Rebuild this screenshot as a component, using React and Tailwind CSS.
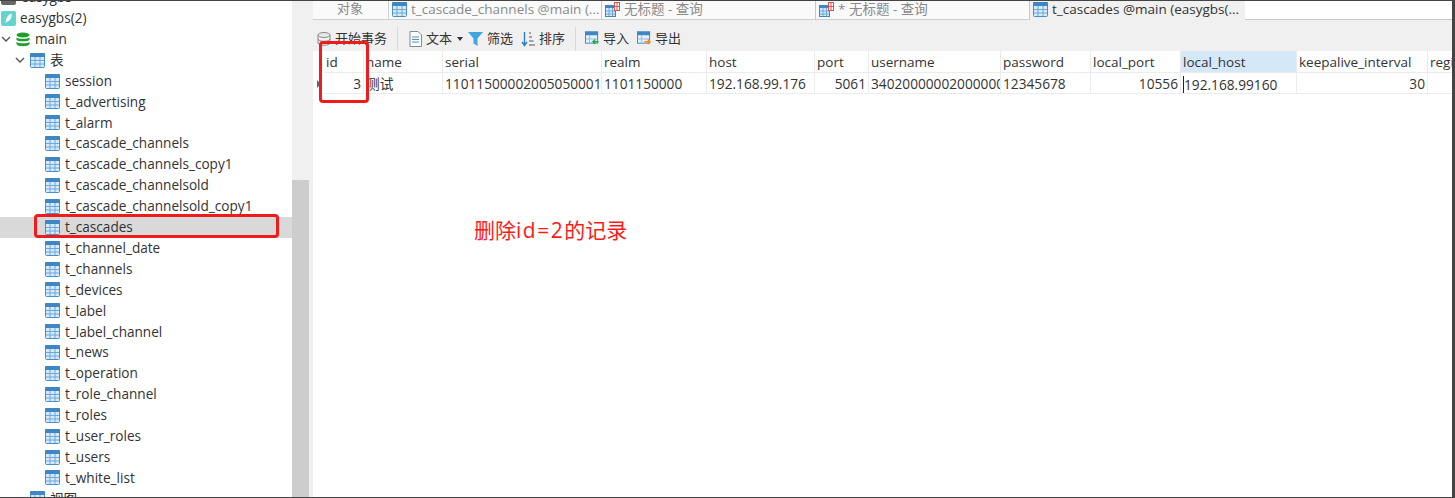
const FONT = "font-['Open_Sans','Noto_Sans_CJK_SC',sans-serif]";

const TABLES = [
  "session",
  "t_advertising",
  "t_alarm",
  "t_cascade_channels",
  "t_cascade_channels_copy1",
  "t_cascade_channelsold",
  "t_cascade_channelsold_copy1",
  "t_cascades",
  "t_channel_date",
  "t_channels",
  "t_devices",
  "t_label",
  "t_label_channel",
  "t_news",
  "t_operation",
  "t_role_channel",
  "t_roles",
  "t_user_roles",
  "t_users",
  "t_white_list",
];

const COLUMNS = [
  { name: "id", value: "3", width: "w-[40px]", right: true },
  { name: "name", value: "测试", width: "w-[79px]" },
  { name: "serial", value: "11011500002005050001", width: "w-[159px]" },
  { name: "realm", value: "1101150000", width: "w-[105px]" },
  { name: "host", value: "192.168.99.176", width: "w-[108px]" },
  { name: "port", value: "5061", width: "w-[54px]", right: true },
  { name: "username", value: "34020000002000000001", width: "w-[132px]" },
  { name: "password", value: "12345678", width: "w-[90px]" },
  { name: "local_port", value: "10556", width: "w-[90px]", right: true },
  { name: "local_host", value: "192.168.99160", width: "w-[116px]", active: true },
  { name: "keepalive_interval", value: "30", width: "w-[131px]", right: true },
  { name: "register_interval", value: "", width: "w-[131px]" },
];

const TableIcon = ({ className = "" }) => (
  <svg width="15" height="15" viewBox="0 0 15 15" className={`shrink-0 ${className}`}>
    <rect x="0.5" y="0.5" width="14" height="14" rx="1" fill="#d6e9f8" stroke="#4a90c8" />
    <rect x="0" y="0" width="15" height="4" rx="1" fill="#3f86c2" />
    <path d="M5 4v10M10 4v10M1 7.5h13M1 11h13" stroke="#6aa9dc" strokeWidth="1" fill="none" />
  </svg>
);

const QueryIcon = () => (
  <svg width="15" height="15" viewBox="0 0 15 15" className="shrink-0">
    <rect x="0.5" y="3.5" width="10" height="11" fill="#d6e9f8" stroke="#3f86c2" />
    <rect x="0" y="3" width="11" height="3" fill="#3f86c2" />
    <path d="M4 6v8M7.5 6v8M1 9h9M1 12h9" stroke="#6aa9dc" fill="none" />
    <rect x="9.5" y="0.5" width="5" height="8" fill="#fff" stroke="#d9534f" />
    <path d="M12 1v7M10 4.500h4" stroke="#d9534f" fill="none" />
  </svg>
);

const Chevron = () => (
  <svg width="10" height="7" viewBox="0 0 10 7" className="shrink-0">
    <path d="M1 1l4 4 4-4" stroke="#555" strokeWidth="1.4" fill="none" />
  </svg>
);

const TreeRow = ({ className = "", children }) => (
  <div className={`flex h-[20.9px] shrink-0 items-center ${className}`}>{children}</div>
);

const Sidebar = () => (
  <aside className="relative flex h-full w-[313px] shrink-0 overflow-hidden bg-white">
    <div className="-mt-[14px] w-[292px] shrink-0 text-[13.600px] text-[#333]">
      <TreeRow className="pl-[1px]">
        <svg width="15" height="15" viewBox="0 0 15 15" className="shrink-0">
          <rect x="0" y="0" width="15" height="15" rx="2" fill="#666" />
        </svg>
        <span className="ml-[5px]">easygbs</span>
      </TreeRow>
      <TreeRow className="pl-[1px]">
        <svg width="15" height="15" viewBox="0 0 15 15" className="shrink-0">
          <rect width="15" height="15" rx="2" fill="#62d5cf" />
          <path d="M4.500 12c0-4 2-8 6-9.500 0.500 3.500-1 7.500-4.500 8z" fill="#fff" />
        </svg>
        <span className="ml-[4px]">easygbs(2)</span>
      </TreeRow>
      <TreeRow className="pl-[1px]">
        <Chevron />
        <svg width="14" height="15" viewBox="0 0 14 15" className="ml-[5px] shrink-0">
          <ellipse cx="7" cy="3" rx="6.500" ry="2.500" fill="#1f9e2c" />
          <path d="M0.500 5.200c1 2 12 2 13 0v2.500c-1 2-12 2-13 0zM0.500 9.700c1 2 12 2 13 0v2.300c-1 3-12 3-13 0z" fill="#1f9e2c" />
        </svg>
        <span className="ml-[5px]">main</span>
      </TreeRow>
      <TreeRow className="pl-[15px]">
        <Chevron />
        <TableIcon className="ml-[5px]" />
        <span className="ml-[5px]">表</span>
      </TreeRow>
      {TABLES.map((name) => (
        <TreeRow
          key={name}
          className={`pl-[45px] ${name === "t_cascades" ? "bg-[#d9d9d9]" : ""}`}
        >
          <TableIcon />
          <span className="ml-[5px]">{name}</span>
        </TreeRow>
      ))}
      <TreeRow className="pl-[30px]">
        <TableIcon />
        <span className="ml-[5px]">视图</span>
      </TreeRow>
    </div>
    <div className="flex w-[17px] shrink-0 flex-col bg-[#f0f0f0]">
      <div className="h-[179px] shrink-0" />
      <div className="flex-1 bg-[#cdcdcd]" />
    </div>
    <div className="w-[4px] shrink-0 bg-[#f0f0f0]" />
  </aside>
);

const Tab = ({ width, active, children }) => (
  <div
    className={`flex h-full shrink-0 items-center gap-[4px] border-r border-[#c8c8c8] pb-[2px] pl-[3px] text-[13.500px] ${width} ${
      active ? "border-r-0 bg-[#f0f0f0] text-[#333]" : "border-b border-b-[#d0d0d0] text-[#8a8a8a]"
    }`}
  >
    {children}
  </div>
);

const TabBar = () => (
  <div className="flex h-[19px] shrink-0 bg-[#fafafa]">
    <div className="flex h-full w-[76px] shrink-0 items-center border-r border-b border-[#d0d0d0] border-b-[#d0d0d0] pb-[2px] pl-[24px] text-[13px] text-[#8a8a8a]">
      对象
    </div>
    <Tab width="w-[213px]">
      <TableIcon />
      <span>t_cascade_channels @main (...</span>
    </Tab>
    <Tab width="w-[214px]">
      <QueryIcon />
      <span>无标题 - 查询</span>
    </Tab>
    <Tab width="w-[214px]">
      <QueryIcon />
      <span>* 无标题 - 查询</span>
    </Tab>
    <Tab width="w-[215px]" active>
      <TableIcon />
      <span>t_cascades @main (easygbs(...</span>
    </Tab>
    <div className="flex-1 border-b border-[#c8c8c8] bg-white" />
  </div>
);

const ToolItem = ({ icon, label, className = "" }) => (
  <div className={`flex items-center ${className}`}>
    {icon}
    <span className="ml-[4px]">{label}</span>
  </div>
);

const Separator = () => <div className="mx-[10px] h-[24px] w-px bg-[#d8d8d8]" />;

const Toolbar = () => (
  <div className="flex h-[31px] shrink-0 items-center bg-[#f0f0f0] pl-[4px] pt-[6px] text-[13px] text-[#333]">
    <ToolItem
      label="开始事务"
      icon={
        <svg width="14" height="16" viewBox="0 0 14 16">
          <ellipse cx="7" cy="4" rx="6" ry="2.500" fill="#e8e8e8" stroke="#8a8a8a" />
          <path d="M1 4v8c0 3 12 3 12 0V4M1 8c0 3 12 3 12 0" fill="none" stroke="#8a8a8a" />
        </svg>
      }
    />
    <Separator />
    <ToolItem
      className="ml-[1px]"
      label="文本"
      icon={
        <svg width="13" height="16" viewBox="0 0 13 16">
          <path d="M1 .5h8l3.500 3.500v11.500H1z" fill="#fff" stroke="#7d8b99" />
          <path d="M3 6h7M3 8.500h7M3 11h7" stroke="#4a90c8" fill="none" />
        </svg>
      }
    />
    <svg width="6" height="4" viewBox="0 0 6 4" className="ml-[5px]">
      <path d="M0 0h6L3 4z" fill="#333" />
    </svg>
    <ToolItem
      className="ml-[5px]"
      label="筛选"
      icon={
        <svg width="15" height="15" viewBox="0 0 15 15">
          <path d="M0 1h15L9.500 7.500V15l-4-2.500v-5z" fill="#41a5e1" />
        </svg>
      }
    />
    <ToolItem
      className="ml-[8px]"
      label="排序"
      icon={
        <svg width="14" height="16" viewBox="0 0 14 16">
          <path d="M3.500 1v13M1 11l2.500 3.500L6 11" stroke="#2f7fc4" strokeWidth="1.400" fill="none" />
          <path d="M8 2h2M8 6h3M8 10h4.500M8 14h6" stroke="#555" fill="none" />
        </svg>
      }
    />
    <Separator />
    <ToolItem
      className="ml-[-1px]"
      label="导入"
      icon={
        <svg width="14" height="15" viewBox="0 0 15 15">
          <rect x="0.500" y="0.500" width="13" height="12" fill="#e4f0fa" stroke="#3f86c2" />
          <rect x="0" y="0" width="14" height="4" fill="#3f86c2" />
          <path d="M5 4v8M1 8h12" stroke="#8dbde3" fill="none" />
          <path d="M14.500 11H9M11 8.500L8.500 11l2.500 2.500" stroke="#2ba84a" strokeWidth="1.500" fill="none" />
        </svg>
      }
    />
    <ToolItem
      className="ml-[8px]"
      label="导出"
      icon={
        <svg width="14" height="15" viewBox="0 0 15 15">
          <rect x="0.500" y="0.500" width="13" height="12" fill="#e4f0fa" stroke="#3f86c2" />
          <rect x="0" y="0" width="14" height="4" fill="#3f86c2" />
          <path d="M5 4v8M1 8h12" stroke="#8dbde3" fill="none" />
          <path d="M8 11h5.500M11.500 8.500L14 11l-2.500 2.500" stroke="#ef8a1f" strokeWidth="1.500" fill="none" />
        </svg>
      }
    />
  </div>
);

const DataGrid = () => (
  <div className="flex-1 overflow-hidden bg-white text-[13.500px] text-[#333]">
    <div className="flex h-[22px] bg-white pl-[11px]">
      {COLUMNS.map((col) => (
        <div
          key={col.name}
          className={`flex shrink-0 items-center overflow-hidden whitespace-nowrap border-r border-b border-[#ececec] px-[2px] pt-[2px] ${col.width} ${
            col.active ? "bg-[#d5e8f7]" : ""
          }`}
        >
          {col.name}
        </div>
      ))}
    </div>
    <div className="relative flex h-[21px] pl-[11px] text-[13.700px]">
      <div className="absolute left-[4px] top-[7px] h-0 w-0 border-y-[4px] border-l-[4px] border-y-transparent border-l-[#666]" />
      {COLUMNS.map((col) => (
        <div
          key={col.name}
          className={`flex shrink-0 items-center overflow-hidden whitespace-nowrap border-r border-b border-[#ececec] px-[2px] pt-[2px] ${col.width} ${
            col.right ? "justify-end" : ""
          }`}
        >
          {col.active ? (
            <span className="border-l border-[#222] leading-[17px]">{col.value}</span>
          ) : (
            col.value
          )}
        </div>
      ))}
    </div>
  </div>
);

export default function App() {
  return (
    <div className={`relative flex h-[498px] w-[1455px] flex-col overflow-hidden bg-white ${FONT}`}>
      <div className="h-[1px] shrink-0 bg-[#444]" />
      <div className="flex min-h-0 flex-1">
        <Sidebar />
        <main className="flex min-w-0 flex-1 flex-col overflow-hidden">
          <TabBar />
          <Toolbar />
          <DataGrid />
        </main>
        <div className="w-[3px] shrink-0 bg-[#444]" />
      </div>
      <div className="h-[1px] shrink-0 bg-[#444]" />

      {/* annotations drawn over the screenshot */}
      <div className="absolute left-[319px] top-[41px] h-[62px] w-[50px] rounded-[4px] border-[3px] border-[#f01c1c]" />
      <div className="absolute left-[34px] top-[214px] h-[24px] w-[245px] rounded-[4px] border-[3px] border-[#f01c1c]" />
      <div className="absolute left-[474px] top-[215px] text-[21px] leading-[30px] text-[#ff1a1a]">
        删除<span className="tracking-[1.500px]">id=2</span>的记录
      </div>
    </div>
  );
}
